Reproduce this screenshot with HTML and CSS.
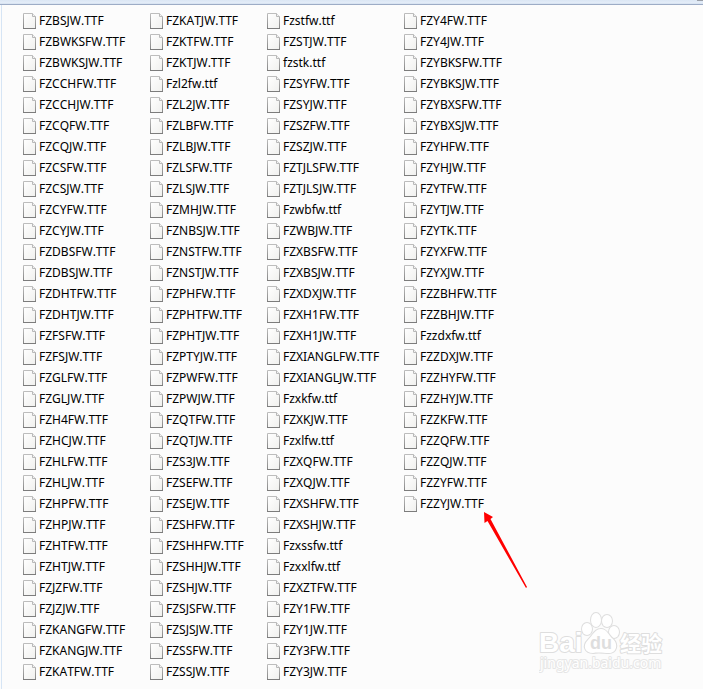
FILE: index.html
```html
<!DOCTYPE html>
<html lang="zh-CN">
<head>
  <meta charset="UTF-8" />
  <meta name="viewport" content="width=device-width, initial-scale=1.0" />
  <title>Fonts</title>
  <link rel="stylesheet" href="styles.css">
</head>
<body>
  <!-- file icon, reused by every row -->
  <svg class="defs" width="0" height="0" aria-hidden="true">
    <linearGradient id="paper" x1="0" y1="0" x2="1" y2="1">
      <stop offset="0" stop-color="#ffffff" />
      <stop offset="1" stop-color="#f0f0ee" />
    </linearGradient>
    <linearGradient id="edge" x1="0" y1="0" x2="0" y2="1">
      <stop offset="0" stop-color="#bdbdbd" />
      <stop offset="1" stop-color="#858585" />
    </linearGradient>
    <symbol id="file" viewBox="0 0 13 16">
      <path d="M.5 .5H9.500L12.500 3.500V15.500H.5Z" fill="url(#paper)" stroke="url(#edge)" />
      <path d="M9.500 .5V3.500H12.500" fill="#f2f2f2" stroke="#b8b8b8" />
      <path d="M0 15.500H13" stroke="#7c7c7c" />
    </symbol>
  </svg>

  <header class="toolbar"><span class="grip"></span></header>

  <main class="files" id="files"></main>

  <svg class="arrow" viewBox="0 0 46 80" aria-hidden="true">
    <path d="M0 0L9 5L6.500 7L43 75L42 76L3.500 9L.5 11Z" fill="#ff0000" />
  </svg>

  <svg class="watermark" viewBox="0 0 130 66" role="img" aria-label="Baidu 经验">
    <text class="logo" x="0" y="44">Bai</text>
    <g class="paw">
      <ellipse cx="48" cy="21" rx="5" ry="6" />
      <ellipse cx="57" cy="12" rx="5" ry="7" />
      <ellipse cx="68" cy="13" rx="5" ry="6" />
      <ellipse cx="75" cy="24" rx="5" ry="6" />
      <path d="M62 21C68 21 69 27 74 31C80 37 77 45 70 45C65 45 59 44 54 45C46 45 43 38 49 32C54 27 56 21 62 21Z" />
    </g>
    <text class="du" x="51" y="41">du</text>
    <text class="cn" x="81" y="43">经验</text>
    <text class="url" x="1" y="60">jingyan.baidu.com</text>
  </svg>

  <script>
    const columns = [
      `FZBSJW.TTF FZBWKSFW.TTF FZBWKSJW.TTF FZCCHFW.TTF FZCCHJW.TTF FZCQFW.TTF
       FZCQJW.TTF FZCSFW.TTF FZCSJW.TTF FZCYFW.TTF FZCYJW.TTF FZDBSFW.TTF
       FZDBSJW.TTF FZDHTFW.TTF FZDHTJW.TTF FZFSFW.TTF FZFSJW.TTF FZGLFW.TTF
       FZGLJW.TTF FZH4FW.TTF FZHCJW.TTF FZHLFW.TTF FZHLJW.TTF FZHPFW.TTF
       FZHPJW.TTF FZHTFW.TTF FZHTJW.TTF FZJZFW.TTF FZJZJW.TTF FZKANGFW.TTF
       FZKANGJW.TTF FZKATFW.TTF`,
      `FZKATJW.TTF FZKTFW.TTF FZKTJW.TTF Fzl2fw.ttf FZL2JW.TTF FZLBFW.TTF
       FZLBJW.TTF FZLSFW.TTF FZLSJW.TTF FZMHJW.TTF FZNBSJW.TTF FZNSTFW.TTF
       FZNSTJW.TTF FZPHFW.TTF FZPHTFW.TTF FZPHTJW.TTF FZPTYJW.TTF FZPWFW.TTF
       FZPWJW.TTF FZQTFW.TTF FZQTJW.TTF FZS3JW.TTF FZSEFW.TTF FZSEJW.TTF
       FZSHFW.TTF FZSHHFW.TTF FZSHHJW.TTF FZSHJW.TTF FZSJSFW.TTF FZSJSJW.TTF
       FZSSFW.TTF FZSSJW.TTF`,
      `Fzstfw.ttf FZSTJW.TTF fzstk.ttf FZSYFW.TTF FZSYJW.TTF FZSZFW.TTF
       FZSZJW.TTF FZTJLSFW.TTF FZTJLSJW.TTF Fzwbfw.ttf FZWBJW.TTF FZXBSFW.TTF
       FZXBSJW.TTF FZXDXJW.TTF FZXH1FW.TTF FZXH1JW.TTF FZXIANGLFW.TTF FZXIANGLJW.TTF
       Fzxkfw.ttf FZXKJW.TTF Fzxlfw.ttf FZXQFW.TTF FZXQJW.TTF FZXSHFW.TTF
       FZXSHJW.TTF Fzxssfw.ttf Fzxxlfw.ttf FZXZTFW.TTF FZY1FW.TTF FZY1JW.TTF
       FZY3FW.TTF FZY3JW.TTF`,
      `FZY4FW.TTF FZY4JW.TTF FZYBKSFW.TTF FZYBKSJW.TTF FZYBXSFW.TTF FZYBXSJW.TTF
       FZYHFW.TTF FZYHJW.TTF FZYTFW.TTF FZYTJW.TTF FZYTK.TTF FZYXFW.TTF
       FZYXJW.TTF FZZBHFW.TTF FZZBHJW.TTF Fzzdxfw.ttf FZZDXJW.TTF FZZHYFW.TTF
       FZZHYJW.TTF FZZKFW.TTF FZZQFW.TTF FZZQJW.TTF FZZYFW.TTF FZZYJW.TTF`
    ];

    let html = "";
    for (const column of columns) {
      html += `<ul class="column">`;
      for (const name of column.split(/\s+/)) {
        html += `<li class="file"><svg class="icon" aria-hidden="true"><use href="#file" /></svg><span>${name}</span></li>`;
      }
      html += `</ul>`;
    }
    document.getElementById("files").innerHTML = html;
  </script>
</body>
</html>
```
FILE: styles.css
```css
* {
  box-sizing: border-box;
}
body {
  position: relative;
  margin: 0;
  background: #fcfcfc;
  color: #000;
  font-family: "Noto Sans", "Noto Sans CJK SC", sans-serif;
  font-size: 12px;
  font-kerning: none;
}
.defs {
  position: absolute;
}
.toolbar {
  display: flex;
  justify-content: flex-end;
  height: 5px;
  background: linear-gradient(#dbe6f4, #e4edf8 3px, #cfdcec);
  border-bottom: 1px solid #9dacc6;
}
.grip {
  width: 6px;
  height: 1px;
  background: #9a9fa8;
}
.files {
  display: grid;
  grid-template-columns: 127px 117px 137px 1fr;
  margin-left: 1px;
  padding: 5px 0 7px 21px;
  border-left: 1px solid #d6e5f5;
}
.column {
  margin: 0;
  padding: 0;
  list-style: none;
}
.file {
  display: flex;
  align-items: center;
  gap: 3px;
  height: 21px;
  line-height: 21px;
  white-space: nowrap;
}
.icon {
  width: 13px;
  height: 16px;
}
.arrow {
  position: absolute;
  left: 484px;
  top: 512px;
  width: 46px;
  height: 80px;
}
.watermark {
  position: absolute;
  left: 539px;
  top: 608px;
  width: 130px;
  height: 66px;
  fill: #fff;
  stroke: #dedede;
  stroke-width: 2px;
  stroke-linejoin: round;
  paint-order: stroke;
}
.logo {
  font: bold 28px "Liberation Sans", sans-serif;
}
.du {
  font: bold 18px "Liberation Sans", sans-serif;
  fill: #dedede;
  stroke: none;
}
.cn {
  font: bold 21px "Noto Sans CJK SC", sans-serif;
}
.url {
  font-size: 14px;
  stroke: #e6e6e6;
}
```
